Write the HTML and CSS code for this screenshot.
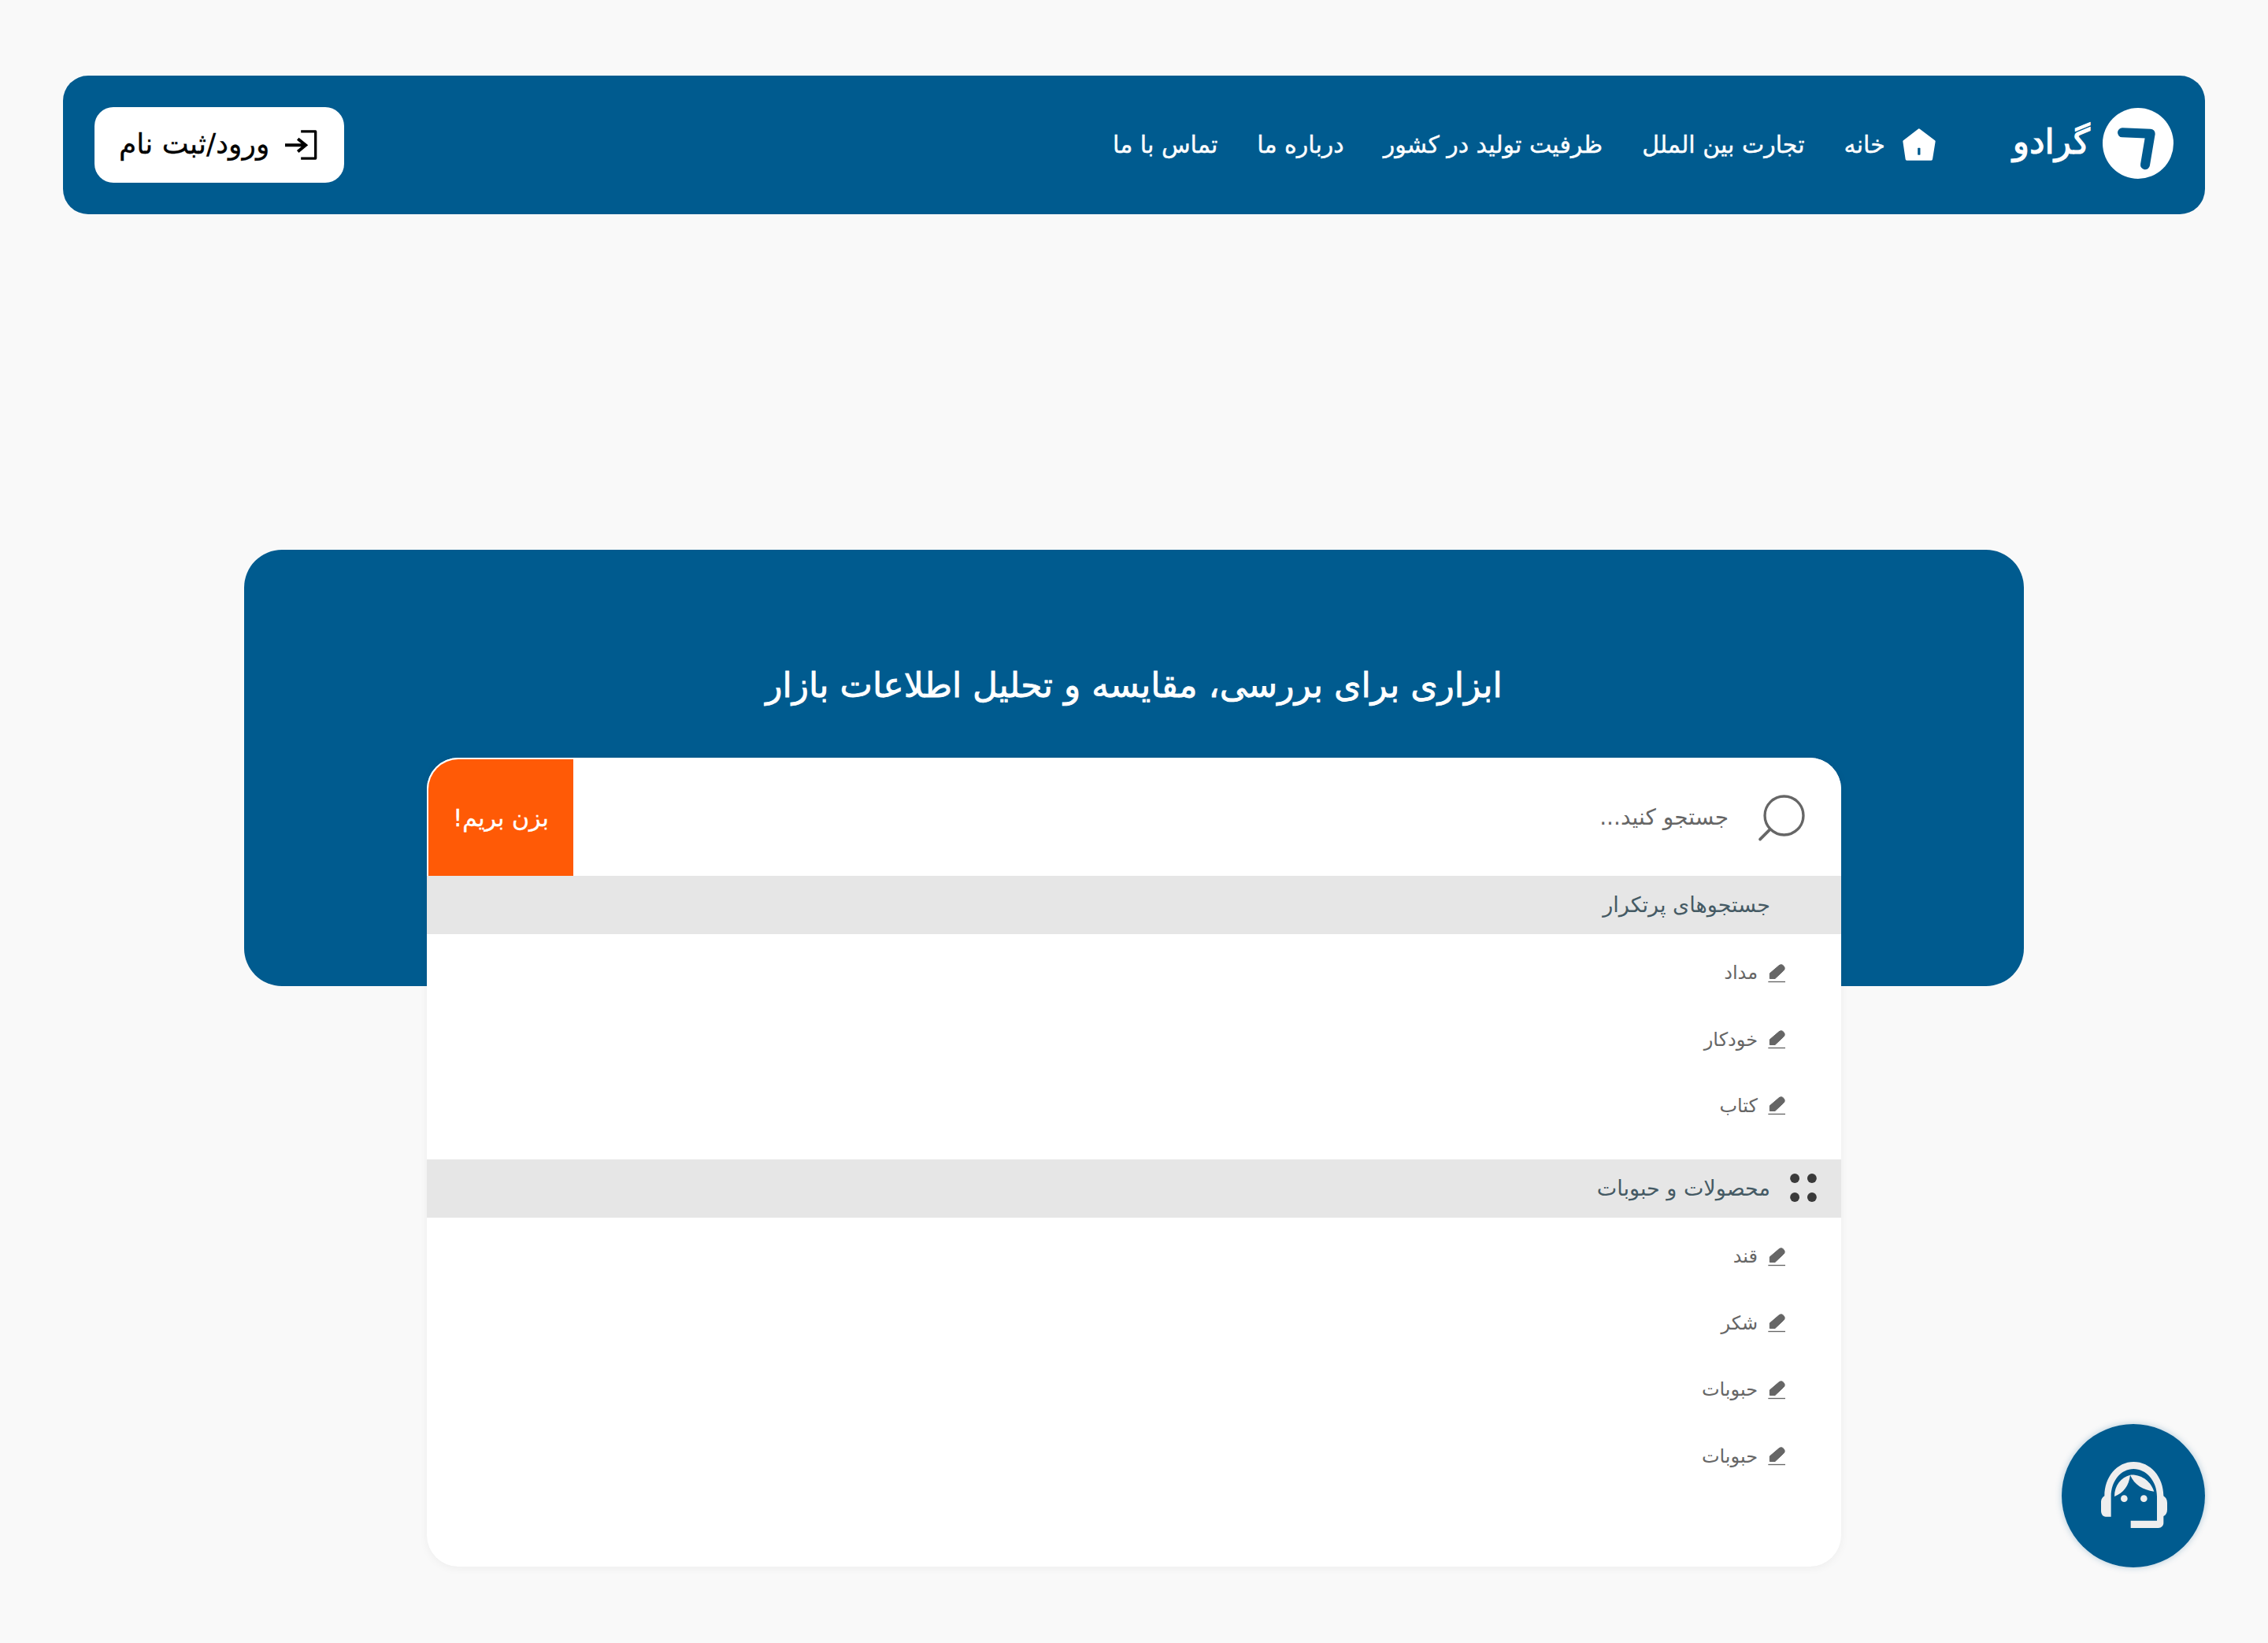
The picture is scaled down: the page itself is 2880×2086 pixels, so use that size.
FILE: index.html
```html
<!DOCTYPE html>
<html lang="fa" dir="rtl">
<head>
<meta charset="utf-8">
<title>گرادو</title>
<link rel="stylesheet" href="styles.css">
</head>
<body>
<header class="topbar">
  <a class="brand">
    <svg class="brand-logo" viewBox="1110 168 270 270"><circle cx="1245" cy="303" r="135" fill="#fff"/><path d="M1185 262L1292 266L1272 385" fill="none" stroke="#005b8f" stroke-width="36" stroke-linecap="round" stroke-linejoin="round"/></svg>
    <span class="brand-name">گرادو</span>
  </a>
  <nav class="nav">
    <a class="nav-item">
      <svg class="home-icon" viewBox="345 250 127 124"><path d="M408 256L466 300L455 368H361L351 300Z" fill="#fff" stroke="#fff" stroke-width="10" stroke-linejoin="round"/><rect x="403" y="325" width="10" height="27" rx="2" fill="#005b8f"/></svg>
      <span>خانه</span>
    </a>
    <a class="nav-item">تجارت بین الملل</a>
    <a class="nav-item">ظرفیت تولید در کشور</a>
    <a class="nav-item">درباره ما</a>
    <a class="nav-item">تماس با ما</a>
  </nav>
  <a class="login">
    <svg class="login-icon" viewBox="900 255 130 113"><path d="M967 260H1023V363H967" fill="none" stroke="#000" stroke-width="10" stroke-linejoin="round"/><path d="M906 312H985M955 288L985 312L955 337" fill="none" stroke="#000" stroke-width="12"/></svg>
    <span>ورود/ثبت نام</span>
  </a>
</header>

<main class="hero">
  <h1 class="hero-title">ابزاری برای بررسی، مقایسه و تحلیل اطلاعات بازار</h1>
  <section class="card">
    <div class="search">
      <svg class="search-icon" viewBox="815 170 185 185"><circle cx="915" cy="255" r="73" fill="none" stroke="#666" stroke-width="10"/><path d="M862 307L824 345" stroke="#666" stroke-width="11" stroke-linecap="round"/></svg>
      <span class="search-placeholder">جستجو کنید...</span>
      <button class="go">بزن بریم!</button>
    </div>

    <div class="group-head"><span class="group-icon"></span><span>جستجوهای پرتکرار</span></div>
    <ul class="group-list first">
      <li class="row"><svg class="pencil" viewBox="852 818 72 74"><use href="#pen"/></svg><span>مداد</span></li>
      <li class="row"><svg class="pencil" viewBox="852 818 72 74"><use href="#pen"/></svg><span>خودکار</span></li>
      <li class="row"><svg class="pencil" viewBox="852 818 72 74"><use href="#pen"/></svg><span>کتاب</span></li>
    </ul>

    <div class="group-head">
      <svg class="group-icon" viewBox="879 125 102 109"><circle cx="897" cy="143" r="18"/><circle cx="963" cy="143" r="18"/><circle cx="897" cy="216" r="18"/><circle cx="963" cy="216" r="18"/></svg>
      <span>محصولات و حبوبات</span>
    </div>
    <ul class="group-list last">
      <li class="row"><svg class="pencil" viewBox="852 818 72 74"><use href="#pen"/></svg><span>قند</span></li>
      <li class="row"><svg class="pencil" viewBox="852 818 72 74"><use href="#pen"/></svg><span>شکر</span></li>
      <li class="row"><svg class="pencil" viewBox="852 818 72 74"><use href="#pen"/></svg><span>حبوبات</span></li>
      <li class="row"><svg class="pencil" viewBox="852 818 72 74"><use href="#pen"/></svg><span>حبوبات</span></li>
    </ul>
  </section>
</main>

<a class="support">
  <svg viewBox="84 84 546 546"><circle cx="357" cy="357" r="273" fill="#005b8f"/><path d="M247 358C247 285 295 228 358 228C422 228 472 285 472 358C481 364 486 372 486 384V410C486 422 481 430 472 435V460C472 472 464 480 452 480H347V452H447V360C447 300 405 255 358 255C310 255 272 300 272 360V437H252C241 437 234 427 234 414V380C234 370 240 362 247 358Z" fill="#eee"/><path d="M345 278C310 287 285 318 285 360C320 345 340 320 345 278C360 315 395 335 436 341C425 305 390 275 345 278Z" fill="#eee"/><circle cx="322" cy="368" r="13" fill="#eee"/><circle cx="397" cy="368" r="13" fill="#eee"/></svg>
</a>

<svg class="defs" width="0" height="0"><defs><g id="pen"><path d="M862 876V856L897 826C903 821 910 822 915 828C920 834 920 841 914 846L882 876Z" fill="#666" stroke="#666" stroke-width="3"/><rect x="856" y="886" width="65" height="4" fill="#666"/></g></defs></svg>
</body>
</html>
```

FILE: styles.css
```css
* { box-sizing: border-box; }
html, body { margin: 0; padding: 0; }
body {
  min-height: 2086px;
  padding: 96px 80px 0;
  background: #f9f9f9;
  font-family: "DejaVu Sans", "Noto Sans", sans-serif;
}
a { color: inherit; text-decoration: none; }
ul { list-style: none; margin: 0; padding: 0; }

.topbar {
  display: flex;
  align-items: center;
  height: 176px;
  padding: 0 40px;
  background: #005b8f;
  border-radius: 32px;
  color: #fff;
}
.brand { display: flex; align-items: center; gap: 16px; margin-left: 98px; margin-top: -4px; }
.brand-logo { width: 90px; height: 90px; display: block; }
.brand-name { font-size: 44px; font-weight: 400; line-height: 1; margin-top: -4px; -webkit-text-stroke: 1.2px #fff; }
.nav { display: flex; align-items: center; gap: 50px; flex: 1; padding-bottom: 2px; font-size: 30px; -webkit-text-stroke: 0.4px #fff; }
.nav-item { display: flex; align-items: center; gap: 22px; white-space: nowrap; }
.home-icon { width: 42px; height: 41px; display: block; }
.login {
  display: flex;
  align-items: center;
  gap: 18px;
  height: 96px;
  padding: 0 34px 0 31px;
  background: #fff;
  border-radius: 24px;
  color: #000;
  font-size: 36px;
  -webkit-text-stroke: 0.3px #000;
}
.login span { margin-top: -3px; }
.login-icon { width: 43px; height: 38px; display: block; }

.hero {
  width: 2260px;
  height: 554px;
  margin: 426px auto 0;
  padding-top: 136px;
  background: #005b8f;
  border-radius: 48px;
}
.hero-title {
  margin: 0 0 56px;
  height: 72px;
  line-height: 72px;
  text-align: center;
  color: #fff;
  font-size: 44px;
  font-weight: 400;
  -webkit-text-stroke: 0.8px #fff;
}
.card {
  width: 1796px;
  height: 1027px;
  margin: 0 auto;
  background: #fff;
  border-radius: 40px;
  box-shadow: 0 2px 12px rgba(0, 0, 0, 0.05);
  color: #666;
}
.search {
  display: flex;
  align-items: center;
  height: 150px;
  padding-right: 42px;
  border: 2px solid #fff;
  border-bottom: 0;
  border-radius: 40px 40px 0 0;
  overflow: hidden;
}
.search-icon { width: 62px; height: 62px; display: block; }
.search-placeholder { flex: 1; margin-right: 37px; padding-bottom: 2px; font-size: 28px; color: #666; }
.go {
  align-self: stretch;
  width: 184px;
  border: 0;
  padding: 0;
  background: #ff5a06;
  color: #fff;
  font: inherit;
  font-size: 30px;
  -webkit-text-stroke: 0.3px #fff;
}
.group-head {
  display: flex;
  align-items: center;
  gap: 25px;
  height: 74px;
  padding-right: 31px;
  padding-bottom: 2px;
  background: #e6e6e6;
  color: #455a64;
  font-size: 27px;
}
.group-icon { display: block; width: 34px; height: 36px; fill: #3a3a3a; }
.group-list { padding-top: 7px; }
.group-list.first { padding-bottom: 26px; }
.row {
  display: flex;
  align-items: center;
  gap: 12px;
  height: 84.4px;
  padding-right: 70px;
  font-size: 24px;
}
.pencil { width: 24px; height: 25px; display: block; }
.defs { position: absolute; }
.support {
  position: fixed;
  left: 2618px;
  top: 1808px;
  width: 182px;
  height: 182px;
  border-radius: 50%;
  box-shadow: 0 0 8px rgba(0, 91, 143, 0.3);
}
.support svg { display: block; width: 182px; height: 182px; }
```
